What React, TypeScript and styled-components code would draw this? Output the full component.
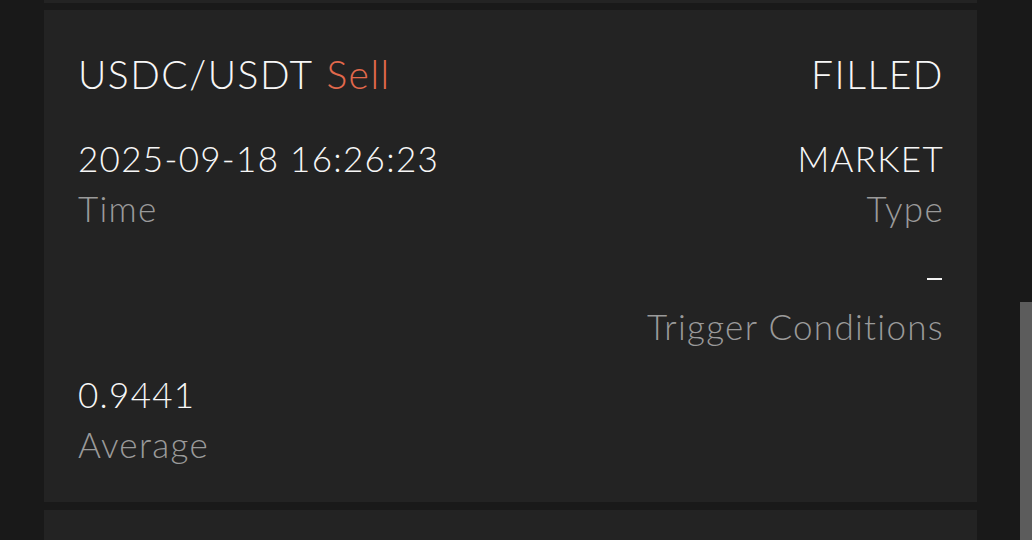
import React from "react";
import styled, { createGlobalStyle } from "styled-components";

const Global = createGlobalStyle`
  html, body { margin: 0; padding: 0; background: #191919; overflow: hidden; }
  body { font-family: Lato, "Open Sans", sans-serif; }
`;

const Page = styled.div`
  width: 1032px;
  height: 540px;
  overflow: hidden;
  position: relative;
`;

const List = styled.div`
  display: flex;
  flex-direction: column;
  gap: 7px;
  margin-left: 44px;
  width: 933px;
`;

const CardEdge = styled.div`
  height: 3px;
  background: #232323;
`;

const Card = styled.div`
  background: #232323;
  padding: 39px 33px 33px 34px;
  display: flex;
  flex-direction: column;
`;

const NextCard = styled.div`
  height: 40px;
  background: #232323;
  margin-top: 1px;
`;

const Header = styled.div`
  display: flex;
  justify-content: space-between;
  font-size: 39px;
  line-height: 50px;
  font-weight: 300;
  letter-spacing: 1.5px;
  color: #f7f7f7;
  margin-bottom: 34px;
`;

const Side = styled.span<{ $sell?: boolean }>`
  color: ${(p) => (p.$sell ? "#e2694c" : "#f7f7f7")};
  margin-left: 2px;
`;

const Grid = styled.div`
  display: grid;
  grid-template-columns: 1fr 1fr;
  row-gap: 18px;
`;

const Field = styled.div<{ $right?: boolean }>`
  display: flex;
  flex-direction: column;
  align-items: ${(p) => (p.$right ? "flex-end" : "flex-start")};
  font-size: 35px;
  line-height: 50px;
  font-weight: 300;
  letter-spacing: 1.3px;
`;

const Value = styled.div`
  color: #f7f7f7;
  min-height: 50px;
`;

const Label = styled.div`
  color: #9a9a9a;
`;

const Dash = styled.div`
  width: 15px;
  height: 2px;
  background: #f2f2f2;
  margin-top: 27px;
  margin-bottom: 21px;
  margin-right: 2px;
`;

const Scrollbar = styled.div`
  position: absolute;
  right: 0;
  top: 302px;
  width: 12px;
  bottom: 0;
  background: #5c5c5c;
`;

export default function App() {
  return (
    <Page>
      <Global />
      <List>
        <CardEdge />
        <Card>
          <Header>
            <div>
              USDC/USDT <Side $sell>Sell</Side>
            </div>
            <div>FILLED</div>
          </Header>
          <Grid>
            <Field>
              <Value>2025-09-18 16:26:23</Value>
              <Label>Time</Label>
            </Field>
            <Field $right>
              <Value>MARKET</Value>
              <Label>Type</Label>
            </Field>
            <Field />
            <Field $right>
              <Dash />
              <Label>Trigger Conditions</Label>
            </Field>
            <Field>
              <Value>0.9441</Value>
              <Label>Average</Label>
            </Field>
            <Field $right />
          </Grid>
        </Card>
        <NextCard />
      </List>
      <Scrollbar />
    </Page>
  );
}
